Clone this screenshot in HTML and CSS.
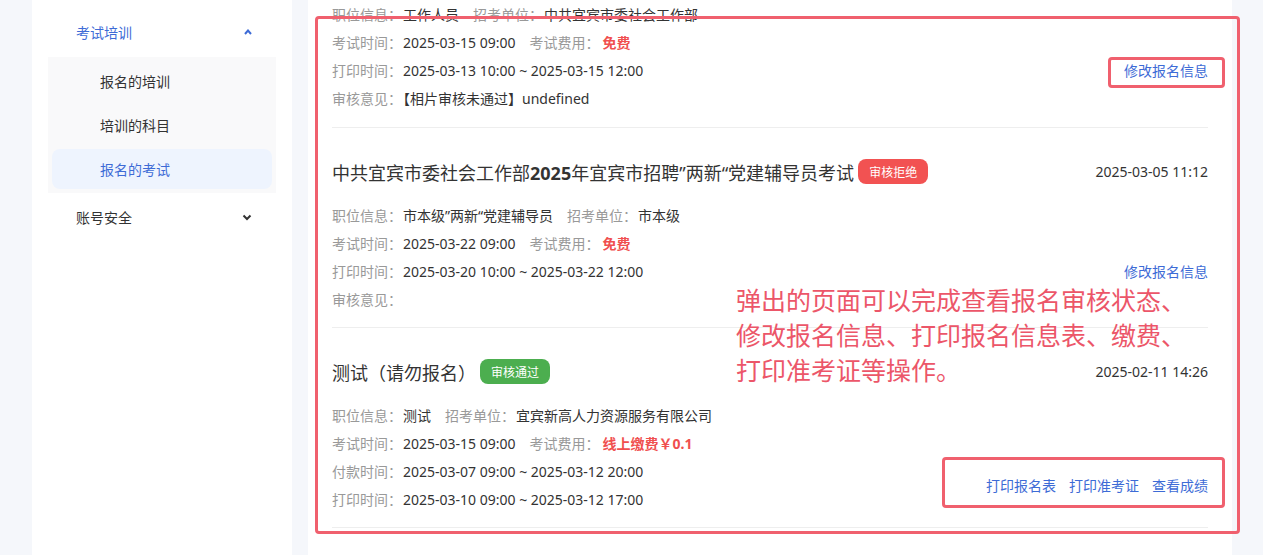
FILE: index.html
```html
<!DOCTYPE html>
<html lang="zh-CN">
<head>
<meta charset="utf-8">
<title>报名的考试</title>
<link rel="stylesheet" href="styles.css">
</head>
<body>
<div class="layout">
  <aside class="sidebar">
    <div class="menu-title is-open">
      <span>考试培训</span>
      <svg class="chev" width="8" height="6" viewBox="0 0 8 6"><polyline points="1,5 4,1.5 7,5" fill="none" stroke="currentColor" stroke-width="2"/></svg>
    </div>
    <div class="submenu">
      <div class="sub-item">报名的培训</div>
      <div class="sub-item">培训的科目</div>
      <div class="sub-item is-active">报名的考试</div>
    </div>
    <div class="menu-title">
      <span>账号安全</span>
      <svg class="chev" width="10" height="7" viewBox="0 0 10 7"><polyline points="1.5,1.5 5,5 8.5,1.5" fill="none" stroke="currentColor" stroke-width="2"/></svg>
    </div>
  </aside>

  <main class="main">
    <div class="item item-first">
      <div class="item-body">
        <div class="row"><span class="pair"><span class="lbl">职位信息：</span><span class="val">工作人员</span></span><span class="pair"><span class="lbl">招考单位：</span><span class="val">中共宜宾市委社会工作部</span></span></div>
        <div class="row"><span class="pair"><span class="lbl">考试时间：</span><span class="val">2025-03-15 09:00</span></span><span class="pair"><span class="lbl">考试费用：</span><span class="val fee">免费</span></span></div>
        <div class="row"><span class="pair"><span class="lbl">打印时间：</span><span class="val">2025-03-13 10:00 ~ 2025-03-15 12:00</span></span></div>
        <div class="row"><span class="pair"><span class="lbl">审核意见：</span><span class="val">【相片审核未通过】undefined</span></span></div>
        <div class="actions act-row3">
          <a class="link">修改报名信息</a>
          <span class="mark mark-edit"></span>
        </div>
      </div>
    </div>

    <div class="item">
      <div class="item-head">
        <span class="title">中共宜宾市委社会工作部<b>2025</b>年宜宾市招聘”两新“党建辅导员考试</span>
        <span class="badge badge-red">审核拒绝</span>
        <span class="date">2025-03-05 11:12</span>
      </div>
      <div class="item-body">
        <div class="row"><span class="pair"><span class="lbl">职位信息：</span><span class="val">市本级”两新“党建辅导员</span></span><span class="pair"><span class="lbl">招考单位：</span><span class="val">市本级</span></span></div>
        <div class="row"><span class="pair"><span class="lbl">考试时间：</span><span class="val">2025-03-22 09:00</span></span><span class="pair"><span class="lbl">考试费用：</span><span class="val fee">免费</span></span></div>
        <div class="row"><span class="pair"><span class="lbl">打印时间：</span><span class="val">2025-03-20 10:00 ~ 2025-03-22 12:00</span></span></div>
        <div class="row"><span class="pair"><span class="lbl">审核意见：</span><span class="val"></span></span></div>
        <div class="actions act-row3">
          <a class="link">修改报名信息</a>
        </div>
      </div>
    </div>

    <div class="item">
      <div class="item-head">
        <span class="title">测试（请勿报名）</span>
        <span class="badge badge-green">审核通过</span>
        <span class="date">2025-02-11 14:26</span>
      </div>
      <div class="item-body">
        <div class="row"><span class="pair"><span class="lbl">职位信息：</span><span class="val">测试</span></span><span class="pair"><span class="lbl">招考单位：</span><span class="val">宜宾新高人力资源服务有限公司</span></span></div>
        <div class="row"><span class="pair"><span class="lbl">考试时间：</span><span class="val">2025-03-15 09:00</span></span><span class="pair"><span class="lbl">考试费用：</span><span class="val fee">线上缴费￥0.1</span></span></div>
        <div class="row"><span class="pair"><span class="lbl">付款时间：</span><span class="val">2025-03-07 09:00 ~ 2025-03-12 20:00</span></span></div>
        <div class="row"><span class="pair"><span class="lbl">打印时间：</span><span class="val">2025-03-10 09:00 ~ 2025-03-12 17:00</span></span></div>
        <div class="actions act-row34">
          <a class="link">打印报名表</a>
          <a class="link">打印准考证</a>
          <a class="link">查看成绩</a>
          <span class="mark mark-print"></span>
        </div>
      </div>
    </div>

    <div class="mark mark-outer"></div>
    <p class="note">弹出的页面可以完成查看报名审核状态、<br>修改报名信息、打印报名信息表、缴费、<br>打印准考证等操作。</p>
  </main>
</div>
</body>
</html>
```

FILE: styles.css
```css
* { box-sizing: border-box; }

html, body {
  margin: 0;
  padding: 0;
  height: 100%;
}

body {
  background: #f5f7fb;
  font-family: "Noto Sans", "Noto Sans CJK SC", sans-serif;
  font-size: 14px;
  color: #333;
  overflow: hidden;
}

.layout {
  display: flex;
  gap: 16px;
  padding-left: 32px;
  height: 555px;
}

/* sidebar */
.sidebar {
  width: 260px;
  background: #fff;
  padding-top: 8px;
  flex-shrink: 0;
}

.menu-title {
  height: 48px;
  display: flex;
  align-items: center;
  justify-content: space-between;
  padding: 0 40px 0 44px;
  color: #333;
}

.menu-title.is-open {
  color: #3d6bd6;
}

.chev { display: block; }

.submenu {
  margin: 1px 16px 0;
  background: #f9f9fa;
  padding: 4px;
  display: flex;
  flex-direction: column;
  gap: 4px;
}

.sub-item {
  height: 40px;
  display: flex;
  align-items: center;
  padding-left: 48px;
  border-radius: 8px;
  color: #333;
}

.sub-item.is-active {
  background: #eef4fe;
  color: #3d6bd6;
}

/* main */
.main {
  position: relative;
  width: 924px;
  flex-shrink: 0;
  background: #fff;
  padding: 0 24px;
}

.item {
  border-bottom: 1px solid #eeeeee;
  padding: 31px 0 14px;
}

.item-first {
  padding-top: 0;
  padding-bottom: 15px;
}

.item-head {
  height: 25px;
  display: flex;
  align-items: center;
  margin-bottom: 17px;
}

.title {
  font-size: 18px;
  color: #333;
}

.title b { font-weight: 700; }

.badge {
  margin-left: 4px;
  height: 25px;
  padding: 0 11px;
  border-radius: 8px;
  color: #fff;
  font-size: 12px;
  display: inline-flex;
  align-items: center;
}

.badge-red { background: #f25252; }
.badge-green { background: #4cae4f; }

.date {
  margin-left: auto;
  font-size: 14px;
  color: #333;
}

.item-body {
  display: grid;
  grid-template-columns: 1fr auto;
  grid-auto-rows: 28px;
  align-items: center;
}

.row {
  grid-column: 1;
  display: flex;
  gap: 14px;
  white-space: nowrap;
}

.lbl { color: #999; }
.val { color: #333; padding-left: 1px; }
.fee { color: #f04f4f; font-weight: 700; padding-left: 3px; }

.actions {
  grid-column: 2;
  position: relative;
  display: flex;
  gap: 13px;
  align-self: stretch;
  align-items: center;
}

.act-row3 { grid-row: 3; }
.act-row34 { grid-row: 3 / span 2; }

.link {
  color: #3d6bd6;
  cursor: pointer;
}

/* red annotation overlays */
.mark {
  position: absolute;
  border: 3px solid #f0606e;
  border-radius: 4px;
  pointer-events: none;
}

.mark-edit {
  left: -16px;
  right: -17px;
  top: 1px;
  bottom: -4px;
}

.mark-print {
  left: -44px;
  right: -17px;
  top: 0;
  bottom: 5px;
}

.mark-outer {
  left: 7px;
  top: 16px;
  width: 925px;
  height: 518px;
}

.note {
  position: absolute;
  left: 428px;
  top: 282px;
  margin: 0;
  font-family: "Noto Sans CJK SC", sans-serif;
  font-size: 25px;
  line-height: 35px;
  color: #ec5669;
  white-space: nowrap;
}
```
